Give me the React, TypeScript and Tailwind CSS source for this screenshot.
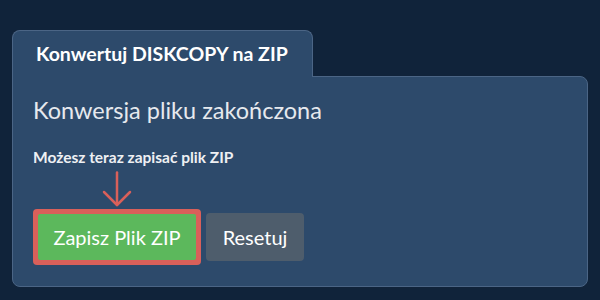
export default function App() {
  return (
    <div className="w-[600px] h-[300px] bg-[#10233a] pt-[30px] px-[12px] font-['Lato','Liberation_Sans',sans-serif]">
      <div className="relative z-10 -mb-px flex h-[47px] w-[301px] items-center rounded-t-lg border border-b-0 border-[#4b6585] bg-[#2d4a6b] pl-[23px]">
        <span className="text-[19.5px] font-bold text-white">Konwertuj DISKCOPY na ZIP</span>
      </div>
      <div className="h-[211px] w-[576px] rounded-b-lg rounded-tr-lg border border-[#4b6585] bg-[#2d4a6b] px-[20px] pt-[19px]">
        <h2 className="text-[23.5px] leading-[1.2] font-normal text-[#e6e9ee]">Konwersja pliku zakończona</h2>
        <p className="mt-[23px] text-[15.5px] leading-[20px] font-bold text-[#eef0f3]">Możesz teraz zapisać plik ZIP</p>
        <div className="mt-[4px] flex w-[167px] justify-center">
          <svg width="30" height="36" viewBox="0 0 30 36" fill="none" stroke="#d9605a" strokeWidth="2.5" strokeLinecap="round" strokeLinejoin="round">
            <path d="M15 1.5V34" />
            <path d="M2 21L15 34L28 21" />
          </svg>
        </div>
        <div className="mt-[2px] flex items-center gap-[5px]">
          <div className="rounded-[4px] bg-[#d9605a] p-[5px]">
            <button className="h-[46px] w-[158px] rounded-[2px] bg-[#5cb85c] text-[20px] text-white">Zapisz Plik ZIP</button>
          </div>
          <button className="h-[48px] w-[98px] rounded-[4px] bg-[#4e5d6c] text-[20px] text-white">Resetuj</button>
        </div>
      </div>
    </div>
  );
}
